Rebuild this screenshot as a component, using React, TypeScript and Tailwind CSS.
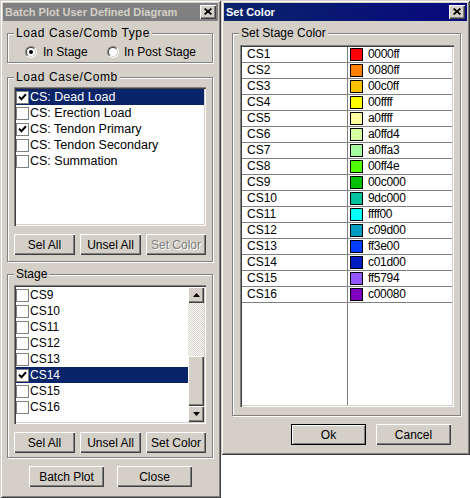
import React from "react";

const FACE = "bg-[#d4d0c8]";
const RAISED =
  "shadow-[inset_1px_1px_0_#fff,inset_-1px_-1px_0_#404040,inset_-2px_-2px_0_#808080]";
const SUNKEN =
  "shadow-[inset_1px_1px_0_#808080,inset_2px_2px_0_#404040,inset_-1px_-1px_0_#fff,inset_-2px_-2px_0_#d4d0c8]";
const FRAME =
  "shadow-[inset_1px_1px_0_#d4d0c8,inset_-1px_-1px_0_#404040,inset_2px_2px_0_#fff,inset_-2px_-2px_0_#808080]";

const loadCases = [
  { name: "CS: Dead Load", checked: true, selected: true },
  { name: "CS: Erection Load", checked: false },
  { name: "CS: Tendon Primary", checked: true },
  { name: "CS: Tendon Secondary", checked: false },
  { name: "CS: Summation", checked: false },
];

const stages = [
  { name: "CS9" },
  { name: "CS10" },
  { name: "CS11" },
  { name: "CS12" },
  { name: "CS13" },
  { name: "CS14", checked: true, selected: true },
  { name: "CS15" },
  { name: "CS16" },
];

// value is stored BGR, swatch shows the RGB colour
const stageColors = [
  ["CS1", "0000ff"],
  ["CS2", "0080ff"],
  ["CS3", "00c0ff"],
  ["CS4", "00ffff"],
  ["CS5", "a0ffff"],
  ["CS6", "a0ffd4"],
  ["CS7", "a0ffa3"],
  ["CS8", "00ff4e"],
  ["CS9", "00c000"],
  ["CS10", "9dc000"],
  ["CS11", "ffff00"],
  ["CS12", "c09d00"],
  ["CS13", "ff3e00"],
  ["CS14", "c01d00"],
  ["CS15", "ff5794"],
  ["CS16", "c00080"],
];

function bgrToRgb(v: string) {
  return "#" + v.slice(4, 6) + v.slice(2, 4) + v.slice(0, 2);
}

function CloseBox() {
  return (
    <div className={`w-4 h-[14px] ${FACE} ${RAISED} flex items-center justify-center pb-[1px]`}>
      <svg width="8" height="7" viewBox="0 0 8 7">
        <path d="M0.6 0.5L7.4 6.5M7.4 0.5L0.6 6.5" stroke="#000" strokeWidth="1.7" />
      </svg>
    </div>
  );
}

function TitleBar({ title, active }: { title: string; active?: boolean }) {
  return (
    <div
      className={`h-[18px] flex items-center justify-between pl-[2px] pr-[2px] ${
        active ? "bg-[linear-gradient(to_right,#0a246a,#08087e)] text-white" : "bg-[#808080] text-[#d4d0c8]"
      }`}
    >
      <span className="text-[11px] font-bold leading-[18px]">{title}</span>
      <CloseBox />
    </div>
  );
}

function Btn({
  label,
  w,
  disabled,
  isDefault,
}: {
  label: string;
  w: string;
  disabled?: boolean;
  isDefault?: boolean;
}) {
  const text = disabled ? "text-[#808080] [text-shadow:1px_1px_0_#fff]" : "text-black";
  if (isDefault) {
    return (
      <div className={`${w} h-[21px] border border-black ${FACE}`}>
        <div
          className={`h-full flex items-center justify-center shadow-[inset_1px_1px_0_#fff,inset_-1px_-1px_0_#808080] text-[12px] ${text}`}
        >
          {label}
        </div>
      </div>
    );
  }
  return (
    <div className={`${w} h-[21px] ${FACE} ${RAISED} flex items-center justify-center text-[12px] ${text}`}>
      {label}
    </div>
  );
}

function Group({
  label,
  className,
  labelClass = "",
  children,
}: {
  label: string;
  className: string;
  labelClass?: string;
  children?: React.ReactNode;
}) {
  return (
    <div
      className={`flex flex-col border border-[#808080] shadow-[inset_1px_1px_0_#fff,1px_1px_0_#fff] ${className}`}
    >
      <span
        className={`self-start ml-[6px] -mt-[8px] px-[2px] bg-[#d4d0c8] leading-[14px] text-[12px] whitespace-nowrap ${labelClass}`}
      >
        {label}
      </span>
      {children}
    </div>
  );
}

function Radio({ on }: { on?: boolean }) {
  return (
    <div className="w-3 h-3 rounded-full border border-t-[#808080] border-l-[#808080] border-b-white border-r-white">
      <div className="w-full h-full rounded-full border border-t-[#404040] border-l-[#404040] border-b-[#d4d0c8] border-r-[#d4d0c8] bg-white flex items-center justify-center">
        {on && <div className="w-1 h-1 rounded-full bg-black" />}
      </div>
    </div>
  );
}

function CheckBox({ checked }: { checked?: boolean }) {
  return (
    <div className="w-[13px] h-[13px] border border-[#808080] bg-white flex items-center justify-center shrink-0">
      {checked && (
        <svg width="9" height="8" viewBox="0 0 9 8">
          <path d="M1 3.6L3.4 6.2L8 1.3" fill="none" stroke="#000" strokeWidth="2" />
        </svg>
      )}
    </div>
  );
}

function ListRow({
  name,
  checked,
  selected,
  size,
}: {
  name: string;
  checked?: boolean;
  selected?: boolean;
  size: string;
}) {
  return (
    <div
      className={`h-4 flex items-center ${selected ? "bg-[#0a246a] text-white" : "text-black"}`}
    >
      <CheckBox checked={checked} />
      <span className={`ml-[1px] leading-4 whitespace-nowrap ${size}`}>{name}</span>
    </div>
  );
}

function Arrow({ up }: { up?: boolean }) {
  return (
    <div className={`h-4 ${FACE} ${RAISED} flex items-center justify-center`}>
      <svg width="7" height="4" viewBox="0 0 7 4">
        <path d={up ? "M3.5 0L7 4H0Z" : "M0 0H7L3.5 4Z"} fill="#000" />
      </svg>
    </div>
  );
}

function ScrollBar() {
  return (
    <div className="w-4 flex flex-col">
      <Arrow up />
      <div className="h-[53px] bg-[image:repeating-conic-gradient(#d4d0c8_0_25%,#fff_0_50%)] bg-[length:2px_2px]" />
      <div className={`h-[50px] ${FACE} ${RAISED}`} />
      <Arrow />
    </div>
  );
}

function BatchPlotWindow() {
  return (
    <div className={`w-[221px] h-[498px] shrink-0 p-[3px] ${FACE} ${FRAME} flex flex-col`}>
      <TitleBar title="Batch Plot User Defined Diagram" />

      <Group
        label="Load Case/Comb Type"
        labelClass="tracking-[0.6px]"
        className="mt-[12px] ml-[4px] w-[206px] h-[30px]"
      >
        <div className="mt-[5px] ml-[17px] flex items-center text-[12px]">
          <div className="w-[82px] flex items-center gap-[6px]">
            <Radio on />
            <span className="leading-[14px]">In Stage</span>
          </div>
          <div className="flex items-center gap-[5px]">
            <Radio />
            <span className="leading-[14px]">In Post Stage</span>
          </div>
        </div>
      </Group>

      <Group
        label="Load Case/Comb"
        labelClass="tracking-[0.6px]"
        className="mt-[14px] ml-[4px] w-[206px] h-[185px]"
      >
        <div className={`mt-[3px] ml-[6px] w-[192px] h-[139px] p-[2px] bg-white ${SUNKEN}`}>
          {loadCases.map((c) => (
            <ListRow key={c.name} {...c} size="text-[12.5px]" />
          ))}
        </div>
        <div className="mt-[8px] ml-[6px] flex gap-[5px]">
          <Btn label="Sel All" w="w-[61px]" />
          <Btn label="Unsel All" w="w-[61px]" />
          <Btn label="Set Color" w="w-[60px]" disabled />
        </div>
      </Group>

      <Group label="Stage" className="mt-[12px] ml-[4px] w-[206px] h-[184px]">
        <div className={`mt-[4px] ml-[6px] w-[192px] h-[139px] p-[2px] bg-white ${SUNKEN} flex`}>
          <div className="flex-1">
            {stages.map((s) => (
              <ListRow key={s.name} {...s} size="text-[12px]" />
            ))}
          </div>
          <ScrollBar />
        </div>
        <div className="mt-[8px] ml-[6px] flex gap-[5px]">
          <Btn label="Sel All" w="w-[61px]" />
          <Btn label="Unsel All" w="w-[61px]" />
          <Btn label="Set Color" w="w-[60px]" />
        </div>
      </Group>

      <div className="mt-[8px] ml-[26px] flex gap-[13px]">
        <Btn label="Batch Plot" w="w-[75px]" />
        <Btn label="Close" w="w-[75px]" />
      </div>
    </div>
  );
}

function SetColorWindow() {
  return (
    <div className={`w-[249px] h-[455px] shrink-0 p-[3px] ${FACE} ${FRAME} flex flex-col`}>
      <TitleBar title="Set Color" active />

      <Group label="Set Stage Color" className="mt-[12px] ml-[8px] w-[229px] h-[383px]">
        <div className={`mt-[5px] ml-[7px] w-[214px] h-[362px] p-[2px] bg-white ${SUNKEN} flex text-[12px]`}>
          <div className="w-[106px] border-r border-[#808080]">
            {stageColors.map(([name]) => (
              <div key={name} className="h-4 border-b border-[#808080] pl-[5px] leading-[15px]">
                {name}
              </div>
            ))}
          </div>
          <div className="flex-1">
            {stageColors.map(([name, v]) => (
              <div key={name} className="h-4 border-b border-[#808080] flex items-center">
                <div
                  className="ml-[2px] w-[13px] h-[13px] border border-black"
                  style={{ backgroundColor: bgrToRgb(v) }}
                />
                <span className="ml-[5px] leading-[15px] tracking-[-0.3px]">{v}</span>
              </div>
            ))}
          </div>
        </div>
      </Group>

      <div className="mt-[8px] ml-[67px] flex gap-[10px]">
        <Btn label="Ok" w="w-[75px]" isDefault />
        <Btn label="Cancel" w="w-[75px]" />
      </div>
    </div>
  );
}

export default function App() {
  return (
    <div className="w-[470px] h-[498px] bg-white flex items-start overflow-hidden font-['Liberation_Sans',Arial,sans-serif] text-black">
      <BatchPlotWindow />
      <SetColorWindow />
    </div>
  );
}
